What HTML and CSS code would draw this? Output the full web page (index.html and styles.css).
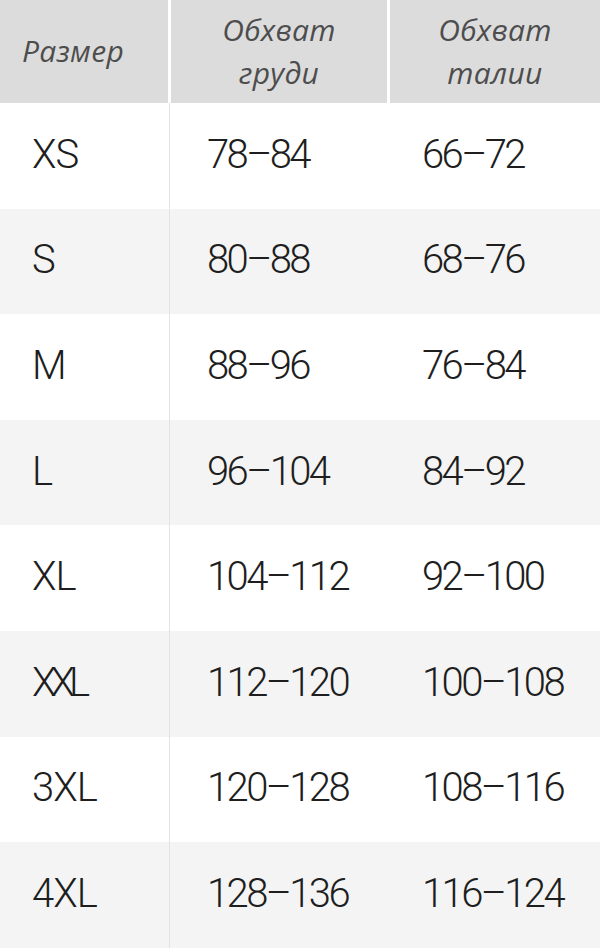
FILE: index.html
```html
<!DOCTYPE html>
<html lang="ru">
<head>
<meta charset="utf-8">
<link rel="stylesheet" href="styles.css">
</head>
<body>
<div class="table">
  <div class="head">
    <div class="hcell first">Размер</div>
    <div class="hcell">Обхват<br>груди</div>
    <div class="hcell">Обхват<br>талии</div>
  </div>
  <div class="row"><div class="c c1">XS</div><div class="c c2">78–84</div><div class="c c3">66–72</div></div>
  <div class="row alt"><div class="c c1">S</div><div class="c c2">80–88</div><div class="c c3">68–76</div></div>
  <div class="row"><div class="c c1">M</div><div class="c c2">88–96</div><div class="c c3">76–84</div></div>
  <div class="row alt"><div class="c c1">L</div><div class="c c2">96–104</div><div class="c c3">84–92</div></div>
  <div class="row"><div class="c c1">XL</div><div class="c c2">104–112</div><div class="c c3">92–100</div></div>
  <div class="row alt"><div class="c c1 tight">XXL</div><div class="c c2">112–120</div><div class="c c3">100–108</div></div>
  <div class="row"><div class="c c1">3XL</div><div class="c c2">120–128</div><div class="c c3">108–116</div></div>
  <div class="row alt"><div class="c c1">4XL</div><div class="c c2">128–136</div><div class="c c3">116–124</div></div>
</div>
</body>
</html>
```
FILE: styles.css
```css
html, body {
  margin: 0;
  padding: 0;
  background: #fff;
}
.table {
  width: 600px;
  height: 948px;
  overflow: hidden;
}
.head {
  display: grid;
  grid-template-columns: 168px 216px 1fr;
  column-gap: 3px;
  height: 103px;
  background: #fff;
}
.hcell {
  background: #dcdcdc;
  display: flex;
  align-items: center;
  justify-content: center;
  text-align: center;
  font-family: "Open Sans", sans-serif;
  font-style: italic;
  font-weight: 400;
  font-size: 30px;
  line-height: 43px;
  letter-spacing: 0.3px;
  color: #4d4d4d;
  padding-bottom: 2px;
}
.hcell.first {
  justify-content: flex-start;
  padding-left: 22px;
}
.row {
  display: grid;
  grid-template-columns: 170px 218px 1fr;
  height: 105.6px;
  background: #fff;
}
.row.alt {
  background: #f4f4f4;
}
.c {
  display: flex;
  align-items: center;
  font-family: Roboto, "Liberation Sans", sans-serif;
  font-weight: 300;
  font-size: 40px;
  letter-spacing: -2.6px;
  color: #1e1e1e;
  padding-bottom: 3px;
}
.c1 {
  border-right: 1px solid #e3e3e3;
  padding-left: 32px;
  letter-spacing: -1px;
}
.c1.tight {
  letter-spacing: -6px;
}
.c2 {
  padding-left: 37px;
}
.c3 {
  padding-left: 34px;
}
```
